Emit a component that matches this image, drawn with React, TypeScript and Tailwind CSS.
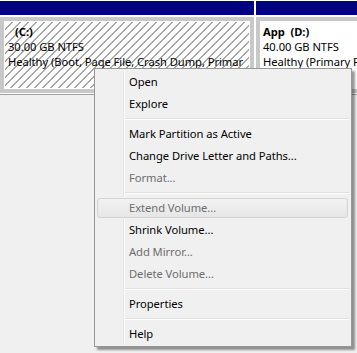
import React from 'react';

interface Item {
  label?: string;
  disabled?: boolean;
  hover?: boolean;
  sep?: boolean;
}

const items: Item[] = [
  { label: 'Open' },
  { label: 'Explore' },
  { sep: true },
  { label: 'Mark Partition as Active' },
  { label: 'Change Drive Letter and Paths...' },
  { label: 'Format...', disabled: true },
  { sep: true },
  { label: 'Extend Volume...', disabled: true, hover: true },
  { label: 'Shrink Volume...' },
  { label: 'Add Mirror...', disabled: true },
  { label: 'Delete Volume...', disabled: true },
  { sep: true },
  { label: 'Properties' },
  { sep: true },
  { label: 'Help' },
];

const ContextMenu = () => {
  return (
    <div className="absolute left-[94px] top-[68px] w-[258px] border border-[#979797] bg-[#f0f0f0] pt-[2px] pb-[1px] shadow-[3px_3px_2px_rgba(0,0,0,0.4)]">
      <div className="absolute left-[28px] top-[2px] bottom-[2px] w-[2px] border-l border-[#e2e3e3] bg-white" />
      {items.map((it, i) =>
        it.sep ? (
          <div key={i} className="flex h-[8px] items-center pl-[29px] pr-[2px]">
            <div className="h-[2px] w-full border-t border-[#e0e0e0] bg-white" />
          </div>
        ) : (
          <div key={i} className="relative h-[22px] px-[2px]">
            {it.hover && (
              <div className="absolute left-[2px] right-[3px] top-[1px] bottom-[1px] rounded-[3px] border border-[#d4d4d4] bg-[linear-gradient(#f2f2f2,#e6e6e6)]" />
            )}
            <div
              className={
                'relative pl-[32px] leading-[22px] ' +
                (it.disabled ? 'text-[#6d6d6d]' : 'text-black')
              }
            >
              {it.label}
            </div>
          </div>
        )
      )}
    </div>
  );
};

const App = () => {
  return (
    <div className="relative h-[353px] w-[357px] overflow-hidden bg-[#f0f0f0] font-['Noto_Sans',sans-serif] text-[11.2px] tracking-[-0.05px]">
      <div className="flex bg-white pt-[1px] h-[95px] border-b border-[#a0a0a0]">
        <div className="w-[254px] shrink-0">
          <div className="h-[14px] bg-[#000080]" />
          <div className="mt-[2px] h-[76px] border-[4px] border-[#c8c8c8] bg-white p-[1px]">
            <div className="h-full bg-[repeating-linear-gradient(135deg,#ffffff_0px,#ffffff_4.6px,#a8a8a8_4.6px,#a8a8a8_5.66px)] pl-[3px] pt-[2px] leading-[15px] whitespace-nowrap overflow-hidden text-black">
              <div className="font-bold pl-[7px]">(C:)</div>
              <div>30.00 GB NTFS</div>
              <div>Healthy (Boot, Page File, Crash Dump, Primar</div>
            </div>
          </div>
        </div>
        <div className="ml-[2px] flex-1 min-w-0">
          <div className="h-[14px] bg-[#000080]" />
          <div className="mt-[2px] h-[76px] border-[4px] border-r-0 border-[#c8c8c8] bg-white p-[1px] pr-0">
            <div className="h-full bg-white pl-[2px] pt-[2px] leading-[15px] whitespace-nowrap overflow-hidden text-black">
              <div className="font-bold">App&nbsp;&nbsp;(D:)</div>
              <div>40.00 GB NTFS</div>
              <div>Healthy (Primary Partition)</div>
            </div>
          </div>
        </div>
      </div>
      <ContextMenu />
    </div>
  );
};

export default App;
